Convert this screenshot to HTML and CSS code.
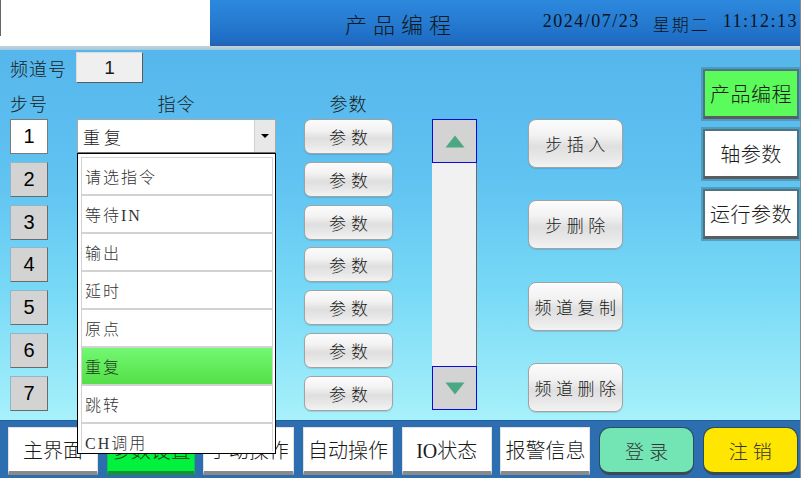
FILE: index.html
```html
<!DOCTYPE html>
<html lang="zh-CN">
<head>
<meta charset="utf-8">
<title>产品编程</title>
<link rel="stylesheet" href="styles.css">
</head>
<body>
<div class="app">
  <header class="top">
    <div class="top-blank"></div>
    <div class="top-bar">
      <div class="title">产品编程</div>
      <div class="clock"><span>2024/07/23</span><span class="week">星期二</span><span>11:12:13</span></div>
    </div>
  </header>
  <div class="sep"></div>
  <main class="main">
    <section class="work">
      <div class="chan"><span class="lbl">频道号</span><div class="chan-box">1</div></div>
      <div class="heads">
        <span class="h-step">步号</span>
        <span class="h-cmd">指令</span>
        <span class="h-par">参数</span>
      </div>
      <div class="grid">
        <div class="c-step">
          <div class="step cur">1</div>
          <div class="step">2</div>
          <div class="step">3</div>
          <div class="step">4</div>
          <div class="step">5</div>
          <div class="step">6</div>
          <div class="step">7</div>
        </div>
        <div class="c-cmd">
          <div class="combo">
            <span class="combo-text">重复</span>
            <span class="combo-arrow"><i></i></span>
            <div class="dropdown">
              <div class="list">
                <div class="item">请选指令</div>
                <div class="item">等待IN</div>
                <div class="item">输出</div>
                <div class="item">延时</div>
                <div class="item">原点</div>
                <div class="item sel">重复</div>
                <div class="item">跳转</div>
                <div class="item">CH调用</div>
              </div>
            </div>
          </div>
        </div>
        <div class="c-par">
          <button class="par">参数</button>
          <button class="par">参数</button>
          <button class="par">参数</button>
          <button class="par">参数</button>
          <button class="par">参数</button>
          <button class="par">参数</button>
          <button class="par">参数</button>
        </div>
        <div class="c-scroll">
          <div class="sb-btn"><svg width="20" height="13" viewBox="0 0 20 13"><polygon points="10,0.5 19.5,12.5 0.5,12.5" fill="#4aa983"/></svg></div>
          <div class="sb-track"></div>
          <div class="sb-btn"><svg width="20" height="13" viewBox="0 0 20 13"><polygon points="0.5,0.5 19.5,0.5 10,12.5" fill="#4aa983"/></svg></div>
        </div>
        <div class="c-act">
          <button class="act">步插入</button>
          <button class="act">步删除</button>
          <button class="act">频道复制</button>
          <button class="act">频道删除</button>
        </div>
      </div>
    </section>
    <nav class="side">
      <button class="nav on">产品编程</button>
      <button class="nav">轴参数</button>
      <button class="nav">运行参数</button>
    </nav>
  </main>
  <footer class="bottom">
    <button class="tab w90">主界面</button>
    <button class="tab green w88">参数设置</button>
    <button class="tab w91">手动操作</button>
    <button class="tab w90">自动操作</button>
    <button class="tab w90">IO状态</button>
    <button class="tab w90">报警信息</button>
    <button class="pill mint">登录</button>
    <button class="pill yellow">注销</button>
  </footer>
</div>
</body>
</html>
```

FILE: styles.css
```css
* { box-sizing: border-box; }
html, body { margin: 0; padding: 0; }
body {
  width: 805px;
  height: 478px;
  overflow: hidden;
  background: #ffffff;
  font-family: "Liberation Serif", "Noto Sans CJK SC", serif;
  font-weight: 300;
  color: #1a1a1a;
}
button {
  font-family: inherit;
  font-weight: inherit;
  color: inherit;
  margin: 0;
  padding: 0;
  cursor: default;
}
.app {
  width: 801px;
  height: 478px;
  border-right: 1px solid #8a8a8a;
  display: flex;
  flex-direction: column;
}

/* header */
.top { display: flex; height: 46px; }
.top-blank { width: 210px; background: linear-gradient(90deg, #666 0 1px, #fff 1px); background-size: 100% 36px; background-repeat: no-repeat; background-color: #fff; }
.top-bar {
  flex: 1;
  background: linear-gradient(#2d89dd 0%, #2479cf 55%, #1f6cc4 88%, #2660ae 100%);
  display: flex;
  align-items: center;
}
.title {
  margin-left: 135px;
  font-size: 22px;
  letter-spacing: 6px;
  color: #101820;
}
.clock {
  margin-left: auto;
  margin-right: 2px;
  display: flex;
  gap: 13px;
  font-size: 18px;
  letter-spacing: 1.5px;
  color: #0c1420;
}
.clock .week { font-size: 17px; letter-spacing: 2px; }
.sep { height: 4px; background: linear-gradient(#c6d3da, #9fc9e2); }

/* main */
.main {
  height: 370px;
  display: flex;
  padding: 2px 0 0 10px;
  background: linear-gradient(180deg, #55b6ec 0%, #60c3f1 35%, #78d9f6 65%, #a7f1fb 100%);
}
.work { flex: 1; }
.chan { display: flex; align-items: center; height: 31px; }
.lbl { width: 66px; font-size: 18px; letter-spacing: 1px; }
.chan-box {
  width: 67px;
  height: 31px;
  background: #efefef;
  border: 1px solid #dcdcdc;
  border-right-color: #5a5a5a;
  border-bottom-color: #5a5a5a;
  font-family: "Liberation Sans", sans-serif;
  font-weight: 400;
  font-size: 19px;
  display: flex;
  align-items: center;
  justify-content: center;
}
.heads { display: flex; margin-top: 9px; height: 22px; font-size: 18px; align-items: center; }
.h-step { width: 38px; letter-spacing: 1px; white-space: nowrap; }
.h-cmd { width: 199px; margin-left: 29px; text-align: center; letter-spacing: 1px; }
.h-par { width: 89px; margin-left: 28px; text-align: center; letter-spacing: 1px; }

.grid { display: flex; margin-top: 5px; align-items: flex-start; }
.c-step, .c-par { display: flex; flex-direction: column; gap: 7.8px; }
.c-step { width: 38px; }
.step {
  height: 35px;
  background: #d3d3d3;
  border: 1px solid #6a6a6a;
  border-top-color: #8fb7cc;
  border-left-color: #8fb7cc;
  font-family: "Liberation Sans", sans-serif;
  font-weight: 400;
  font-size: 20px;
  display: flex;
  align-items: center;
  justify-content: center;
  color: #000;
}
.step.cur { background: #fff; border-color: #7a7a7a; }

.c-cmd { width: 199px; margin-left: 29px; }
.combo {
  position: relative;
  height: 34px;
  background: #fff;
  border: 1px solid #a8a8a8;
  border-bottom-color: #707070;
  display: flex;
  align-items: center;
}
.combo-text { padding-left: 5px; font-size: 17px; letter-spacing: 4px; flex: 1; }
.combo-arrow {
  width: 21px;
  height: 100%;
  background: #e8e8e8;
  border-left: 1px solid #d0d0d0;
  display: flex;
  align-items: center;
  justify-content: center;
}
.combo-arrow i {
  width: 0; height: 0;
  border-left: 4px solid transparent;
  border-right: 4px solid transparent;
  border-top: 4px solid #000;
}
.dropdown {
  position: absolute;
  z-index: 10;
  top: 33px;
  left: -1px;
  width: 199px;
  background: #fff;
  border: 1px solid #000;
  padding: 3px 2px 2px 3px;
}
.list { height: 294px; overflow: hidden; }
.item {
  height: 38px;
  border: 1px solid #d2d2d2;
  padding-left: 3px;
  display: flex;
  align-items: center;
  font-size: 16px;
  letter-spacing: 2px;
  color: #333;
}
.item.sel { background: linear-gradient(#72f872, #55df48); color: #1f3a1f; }

.c-par { width: 89px; margin-left: 28px; }
.par, .act {
  border: 1px solid #a2a2a2;
  background: linear-gradient(#fcfcfc 0%, #f2f2f2 32%, #dfdfdf 56%, #e8e8e8 80%, #f3f3f3 100%);
  box-shadow: 0 1px 1px rgba(0,0,0,.12);
}
.par {
  height: 35px;
  border-radius: 7px;
  font-size: 17px;
  letter-spacing: 5px;
  padding-left: 5px;
}
.c-scroll {
  width: 45px;
  height: 291px;
  margin-left: 39px;
  display: flex;
  flex-direction: column;
}
.sb-btn {
  height: 44px;
  background: #d3d3d3;
  border: 1px solid #0a0ae0;
  display: flex;
  align-items: center;
  justify-content: center;
}
.sb-track { flex: 1; background: #f1f1f1; border-right: 1px solid #6a6a6a; }

.c-act {
  width: 95px;
  height: 293px;
  margin-left: 51px;
  display: flex;
  flex-direction: column;
  justify-content: space-between;
}
.act {
  height: 49px;
  border-radius: 8px;
  font-size: 17px;
  letter-spacing: 4.5px;
  padding-left: 4px;
}

/* side nav */
.side {
  width: 96px;
  margin: 17px 1px 0 0;
  display: flex;
  flex-direction: column;
  gap: 10px;
}
.nav {
  height: 50px;
  background: #fff;
  border: 2px solid #4f7380;
  border-bottom-width: 3px;
  border-bottom-color: #5c5c5c;
  box-shadow: 0 0 0 2px rgba(74, 146, 178, 0.75);
  font-size: 20px;
  letter-spacing: 0.5px;
}
.nav.on { background: #5cfb5c; }

/* bottom */
.bottom {
  height: 58px;
  background: #2d6eb0;
  border-top: 1px solid #265f9e;
  display: flex;
  gap: 8.7px;
  padding: 6px 0 0 8px;
}
.tab {
  height: 48px;
  background: #fff;
  border: 1px solid #e2e2e2;
  border-bottom: 4px solid #8a8a8a;
  font-size: 20px;
  white-space: nowrap;
  overflow: hidden;
}
.w90 { width: 90px; }
.w88 { width: 88px; }
.w91 { width: 91px; }
.tab.green { background: #00f23e; border-color: #10c840; border-bottom-color: #18903a; color: #1a3a1a; }
.pill {
  width: 95px;
  height: 48px;
  border-radius: 11px;
  border: 1px solid #2a4c5c;
  border-bottom-width: 3px;
  border-bottom-color: #3c4a50;
  font-size: 19px;
  letter-spacing: 5px;
  padding-left: 5px;
  color: #333;
}
.mint { background: #73e5b5; }
.yellow { background: #ffe600; }
```
